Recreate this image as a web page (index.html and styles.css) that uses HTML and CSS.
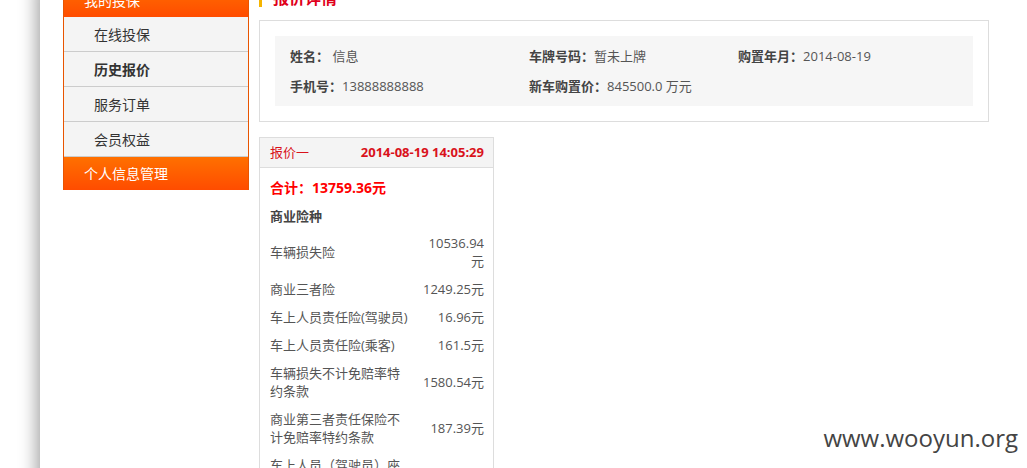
FILE: index.html
```
<!DOCTYPE html>
<html lang="zh-CN">
<head>
    <meta charset="UTF-8">
    <title>报价详情</title>
    <link rel="stylesheet" href="styles.css">
</head>
<body>

    <div class="page">
        <!-- 左侧菜单 -->
        <div class="side-menu">
            <div class="menu-title">我的投保</div>
            <a class="menu-item">在线投保</a>
            <a class="menu-item active">历史报价</a>
            <a class="menu-item">服务订单</a>
            <a class="menu-item">会员权益</a>
            <div class="menu-title">个人信息管理</div>
        </div>

        <!-- 报价详情 -->
        <div class="main">
            <h3 class="section-title">报价详情</h3>

            <div class="info-box">
                <div class="info-grid">
                    <div><b>姓名：</b> 信息</div>
                    <div><b>车牌号码：</b>暂未上牌</div>
                    <div><b>购置年月：</b>2014-08-19</div>
                    <div><b>手机号：</b>13888888888</div>
                    <div><b>新车购置价：</b>845500.0 万元</div>
                </div>
            </div>

            <div class="quote-card">
                <div class="quote-head">
                    <span>报价一</span>
                    <b>2014-08-19 14:05:29</b>
                </div>
                <div class="quote-body">
                    <p class="total">合计：13759.36元</p>
                    <table class="quote-table">
                        <colgroup><col><col class="num-col"></colgroup>
                        <tr><th colspan="2">商业险种</th></tr>
                        <tr><td>车辆损失险</td><td class="num">10536.94元</td></tr>
                        <tr><td>商业三者险</td><td class="num">1249.25元</td></tr>
                        <tr><td>车上人员责任险(驾驶员)</td><td class="num">16.96元</td></tr>
                        <tr><td>车上人员责任险(乘客)</td><td class="num">161.5元</td></tr>
                        <tr><td>车辆损失不计免赔率特约条款</td><td class="num">1580.54元</td></tr>
                        <tr><td>商业第三者责任保险不计免赔率特约条款</td><td class="num">187.39元</td></tr>
                        <tr><td>车上人员（驾驶员）座位责任险不计免赔率特约条款</td><td class="num">2.54元</td></tr>
                    </table>
                </div>
            </div>
        </div>
    </div>

    <div class="watermark">www.wooyun.org</div>

</body>
</html>
```

FILE: styles.css
```
html, body {
    margin: 0;
    height: 100%;
    overflow: hidden;
    background: #fff;
}

body {
    font-family: "Open Sans", "Noto Sans CJK SC", sans-serif;
    font-size: 13px;
    color: #555;
}

/* page is scrolled a little, so the top is cut off */
.page {
    display: flex;
    align-items: flex-start;
    margin-left: 40px;
    margin-top: -16px;
    padding-left: 23px;
    min-height: 700px;
    background: #fff;
    box-shadow: -4px 0 16px rgba(0, 0, 0, 0.35);
}

/* 左侧菜单 */
.side-menu {
    width: 184px;
    border-left: 1px solid #e85400;
    border-right: 1px solid #e85400;
    background: #f4f4f4;
}

.menu-title {
    height: 33px;
    line-height: 33px;
    padding-left: 20px;
    color: #fff;
    font-size: 14px;
    background: linear-gradient(#ff7000, #ff4c00);
}

.menu-item {
    display: block;
    height: 34px;
    line-height: 35px;
    padding-left: 30px;
    border-bottom: 1px solid #ccc;
    color: #333;
    font-size: 14px;
}

.menu-item.active {
    font-weight: bold;
}

/* 右侧内容 */
.main {
    margin-left: 10px;
    width: 730px;
}

.section-title {
    margin: 0 0 13px;
    height: 23px;
    line-height: 28px;
    padding-left: 11px;
    border-left: 3px solid #f5b400;
    color: #e0001b;
    font-size: 16px;
    overflow: hidden;
}

.info-box {
    border: 1px solid #ddd;
    padding: 15px;
}

.info-grid {
    display: grid;
    grid-template-columns: 239px 209px 1fr;
    padding: 5px 15px;
    background: #f6f6f6;
    line-height: 30px;
    font-size: 13px;
}

.info-grid b {
    color: #444;
}

.quote-card {
    width: 233px;
    margin-top: 15px;
    border: 1px solid #ddd;
}

.quote-head {
    display: flex;
    justify-content: space-between;
    height: 29px;
    line-height: 29px;
    padding: 0 9px 0 10px;
    background: #f4f4f4;
    border-bottom: 1px solid #ddd;
    color: #d9121b;
    font-size: 13px;
}

.quote-body {
    padding: 0 9px 0 10px;
}

.total {
    margin: 0;
    padding-top: 9px;
    height: 35px;
    line-height: 22px;
    color: #f00;
    font-size: 14px;
    font-weight: bold;
    box-sizing: border-box;
}

.quote-table {
    width: 100%;
    table-layout: fixed;
    border-collapse: collapse;
}

.quote-table .num-col {
    width: 74px;
}

.quote-table th {
    text-align: left;
    color: #444;
    font-weight: bold;
    padding: 4px 0 4px;
    line-height: 18px;
}

.quote-table td {
    padding: 5px 0;
    line-height: 18px;
    vertical-align: middle;
}

.quote-table td.num {
    text-align: right;
    padding-left: 8px;
}

.watermark {
    position: absolute;
    right: 9px;
    bottom: 14px;
    font-family: "Open Sans", sans-serif;
    font-size: 24px;
    color: #444;
}
```
